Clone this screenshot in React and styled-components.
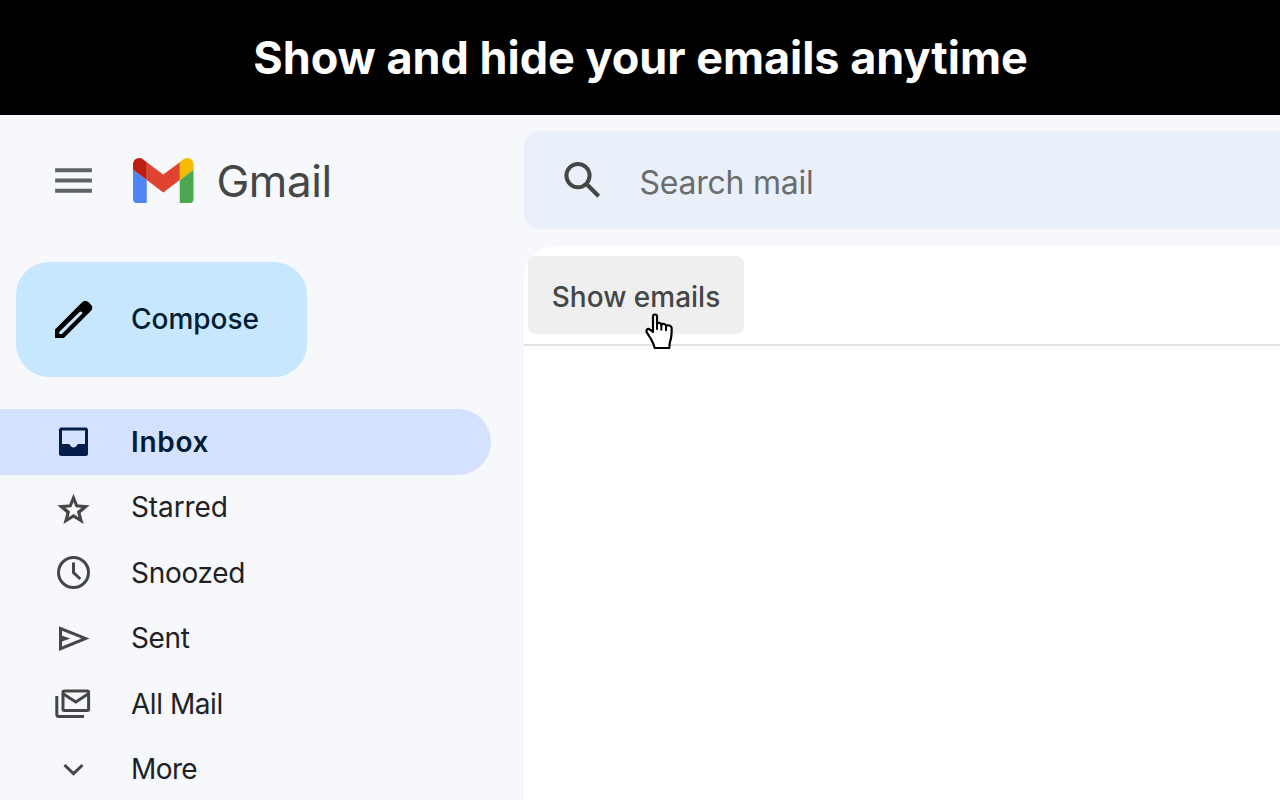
import React from "react";
import styled, { createGlobalStyle, css } from "styled-components";

const GlobalStyle = createGlobalStyle`
  * { box-sizing: border-box; }
  body {
    margin: 0;
    background: #f6f8fc;
    font-family: Inter, "Liberation Sans", sans-serif;
    overflow: hidden;
  }
  svg { display: block; flex: none; }
`;

const Page = styled.div`
  display: flex;
  flex-direction: column;
  width: 1280px;
  height: 800px;
  overflow: hidden;
`;

const Banner = styled.header`
  display: flex;
  align-items: center;
  justify-content: center;
  flex: none;
  height: 115px;
  padding-left: 1px;
  background: #000;
`;

const Headline = styled.h1`
  margin: 0;
  color: #fff;
  font-size: 45px;
  font-weight: 700;
  letter-spacing: -0.03px;
  line-height: 55px;
  white-space: nowrap;
`;

const Mail = styled.div`
  display: flex;
  flex: 1;
  min-height: 0;
  background: #f6f8fc;
`;

const Sidebar = styled.aside`
  display: flex;
  flex-direction: column;
  flex: none;
  width: 523.5px;
`;

const Brand = styled.div`
  display: flex;
  align-items: center;
  flex: none;
  height: 131px;
  padding-left: 49px;
`;

const Wordmark = styled.span`
  margin-left: 22.5px;
  padding-top: 1.4px;
  color: #444746;
  font-size: 44px;
  letter-spacing: -0.4px;
  line-height: 54px;
`;

const ComposeButton = styled.button`
  display: flex;
  align-items: center;
  gap: 33px;
  flex: none;
  width: 291px;
  height: 114.5px;
  margin: 16.4px 0 32.3px 16.4px;
  padding: 0 0 0 32.6px;
  border: 0;
  border-radius: 33px;
  background: #c7e7ff;
  color: #001d35;
  font: 500 28px/34px Inter, sans-serif;
`;

const ComposeLabel = styled.span`
  padding-bottom: 2px;
`;

const Nav = styled.nav`
  display: flex;
  flex-direction: column;
  flex: none;
`;

const NavItem = styled.a`
  display: flex;
  align-items: center;
  gap: 37px;
  flex: none;
  width: 490.7px;
  height: 65.45px;
  padding-left: 53px;
  border-radius: 0 33px 33px 0;
  color: #444746;
  ${(p) =>
    p.$active &&
    css`
      background: #d5e2ff;
      color: #041e49;
    `}
`;

const NavLabel = styled.span`
  color: ${(p) => (p.$active ? "#001d35" : "#202124")};
  font-size: 28px;
  font-weight: ${(p) => (p.$active ? 600 : 400)};
  letter-spacing: ${(p) => p.$tracking || 0}px;
  line-height: 34px;
`;

const Content = styled.main`
  display: flex;
  flex-direction: column;
  flex: 1;
  min-width: 0;
  padding-top: 16.4px;
`;

const SearchBar = styled.div`
  display: flex;
  align-items: center;
  gap: 32px;
  flex: none;
  height: 98px;
  padding-left: 34px;
  border-radius: 16px 0 0 16px;
  background: #e9f0fa;
  color: #444746;
`;

const Placeholder = styled.span`
  padding-top: 5px;
  color: #6b6c6c;
  font-size: 32px;
  letter-spacing: -0.25px;
  line-height: 38px;
`;

const Panel = styled.section`
  flex: 1;
  margin-top: 16.6px;
  border-radius: 32px 0 0 0;
  background: #fff;
`;

const Toolbar = styled.div`
  display: flex;
  height: 100px;
  padding: 10px 0 0 4.5px;
  border-bottom: 2px solid #e2e3e3;
`;

const ShowButton = styled.button`
  position: relative;
  width: 216px;
  height: 78px;
  padding: 4px 0 0;
  border: 0;
  border-radius: 8px;
  background: #efefef;
  color: #444746;
  font: 500 28px/34px Inter, sans-serif;
`;

const Pointer = styled.svg`
  position: absolute;
  left: 116.8px;
  top: 57px;
`;

const MenuIcon = () => (
  <svg width="49" height="49" viewBox="0 0 24 24" fill="#5f6368">
    <path d="M3 18h18v-2H3v2zm0-5h18v-2H3v2zm0-7v2h18V6H3z" />
  </svg>
);

const Logo = styled.svg`
  margin: 0.4px 0 0 35.4px;
`;

const GmailLogo = () => (
  <Logo width="60.5" height="45.4" viewBox="52 42 88 66">
    <path fill="#4f86f7" d="M58 108h14V74L52 59v43c0 3.32 2.69 6 6 6" />
    <path fill="#4aa84f" d="M120 108h14c3.32 0 6-2.69 6-6V59l-20 15" />
    <path fill="#f5bb00" d="M120 48v26l20-15v-8c0-7.42-8.47-11.65-14.4-7.2" />
    <path fill="#e0432f" d="M72 74V48l24 18 24-18v26L96 92" />
    <path fill="#bb1f14" d="M52 51v8l20 15V48l-5.6-4.2c-5.94-4.45-14.4-.22-14.4 7.2" />
  </Logo>
);

const PencilIcon = () => (
  <svg width="49" height="49" viewBox="0 0 49 49">
    <path
      fill="#000"
      fillRule="evenodd"
      d="M6 43v-8.600L33.100 7.300c2-2 4.500-2 6.500 0l2.200 2.200c2.100 2.100 2.100 4.500 0 6.600L14.900 43zM10.200 38.900h2.600L32.800 19.100c.8-.8.8-1.300 0-2.100s-1.400-.8-2.200 0L10.200 37.100z"
    />
  </svg>
);

const InboxIcon = () => (
  <svg width="41" height="41" viewBox="0 0 41 41">
    <path
      fill="currentColor"
      fillRule="evenodd"
      d="M8.500 6.500h24a2.500 2.500 0 0 1 2.500 2.500v23.600a2.500 2.500 0 0 1-2.500 2.500h-24a2.500 2.500 0 0 1-2.500-2.500V9a2.500 2.500 0 0 1 2.500-2.500zM9 9.500V23h6.800c.5 0 .8.2 1.100.7 1.700 3.700 5.600 3.700 7.300 0 .3-.5.6-.7 1.100-.7H32V9.500z"
    />
  </svg>
);

const StarIcon = () => (
  <svg width="41" height="41" viewBox="0 0 41 41">
    <path
      fill="currentColor"
      fillRule="evenodd"
      d="M20.500 6.700l4.300 10.700 11.900.9-9.100 7.600 3 11.100-10.100-6.200-10.100 6.200 3-11.100-9.100-7.600 11.900-.9zM20.500 15l-2.200 5.300-5.700.5 4.400 3.800-1.400 5.600 4.900-3.100 4.900 3.100-1.400-5.600 4.400-3.800-5.700-.5z"
    />
  </svg>
);

const ClockIcon = () => (
  <svg width="41" height="41" viewBox="0 0 41 41" fill="none" stroke="currentColor" strokeWidth="3">
    <circle cx="20.500" cy="20.500" r="15" />
    <path d="M20.500 10.600V20.600L27.300 27" />
  </svg>
);

const SendIcon = () => (
  <svg width="41" height="41" viewBox="0 0 41 41">
    <path
      fill="currentColor"
      fillRule="evenodd"
      d="M6 8.300L36.500 20.600 6 32.900zM9 12.800v4.900l8.400 2.900L9 23.500v4.900l19.500-7.800z"
    />
  </svg>
);

const AllMailIcon = () => (
  <svg width="41" height="41" viewBox="0 0 41 41" fill="none" stroke="currentColor" strokeWidth="3">
    <rect x="10" y="8.100" width="25.600" height="19.400" rx="1.200" />
    <path d="M10.500 11l12.300 8L35 11" />
    <path d="M3.800 13v18.500a2 2 0 0 0 2 2H31" />
  </svg>
);

const ChevronIcon = () => (
  <svg width="41" height="41" viewBox="0 0 41 41" fill="none" stroke="currentColor" strokeWidth="3">
    <path d="M11.500 16l9 8.700 9-8.700" />
  </svg>
);

const SearchIcon = () => (
  <svg width="50" height="50" viewBox="0 0 50 50" fill="none" stroke="currentColor">
    <circle cx="20" cy="20.600" r="11.600" strokeWidth="4" />
    <path d="M28 28.600L40.700 41.300" strokeWidth="4.200" />
  </svg>
);

const HandPointer = () => (
  <Pointer width="28.700" height="36.700" viewBox="43 38 86 110">
    <path
      fill="#fff"
      stroke="#000"
      strokeWidth="6.500"
      strokeLinejoin="round"
      strokeLinecap="round"
      d="M67 95V48c0-7.500 12-7.500 12 0v22c3-4 13-3 13 3 4-4 14-3 14 4 4-4 17-2 17 8 0 18-1 27-4 36-2 6-3 15-3 22H72c-2-9-5-16-9-23-4-8-8-13-13-21-6-9 0-18 8-11z"
    />
    <path
      fill="none"
      stroke="#000"
      strokeWidth="6"
      strokeLinecap="round"
      d="M79 68v18M92 73v15M106 77v13"
    />
  </Pointer>
);

const items = [
  { label: "Inbox", Icon: InboxIcon, active: true, tracking: 0.7 },
  { label: "Starred", Icon: StarIcon, tracking: -0.1 },
  { label: "Snoozed", Icon: ClockIcon, tracking: -0.3 },
  { label: "Sent", Icon: SendIcon, tracking: -0.4 },
  { label: "All Mail", Icon: AllMailIcon, tracking: -0.45 },
  { label: "More", Icon: ChevronIcon, tracking: -0.6 },
];

export default function App() {
  return (
    <Page>
      <GlobalStyle />
      <Banner>
        <Headline>Show and hide your emails anytime</Headline>
      </Banner>
      <Mail>
        <Sidebar>
          <Brand>
            <MenuIcon />
            <GmailLogo />
            <Wordmark>Gmail</Wordmark>
          </Brand>
          <ComposeButton>
            <PencilIcon />
            <ComposeLabel>Compose</ComposeLabel>
          </ComposeButton>
          <Nav>
            {items.map(({ label, Icon, active, tracking }) => (
              <NavItem key={label} $active={active}>
                <Icon />
                <NavLabel $active={active} $tracking={tracking}>
                  {label}
                </NavLabel>
              </NavItem>
            ))}
          </Nav>
        </Sidebar>
        <Content>
          <SearchBar>
            <SearchIcon />
            <Placeholder>Search mail</Placeholder>
          </SearchBar>
          <Panel>
            <Toolbar>
              <ShowButton>
                Show emails
                <HandPointer />
              </ShowButton>
            </Toolbar>
          </Panel>
        </Content>
      </Mail>
    </Page>
  );
}
